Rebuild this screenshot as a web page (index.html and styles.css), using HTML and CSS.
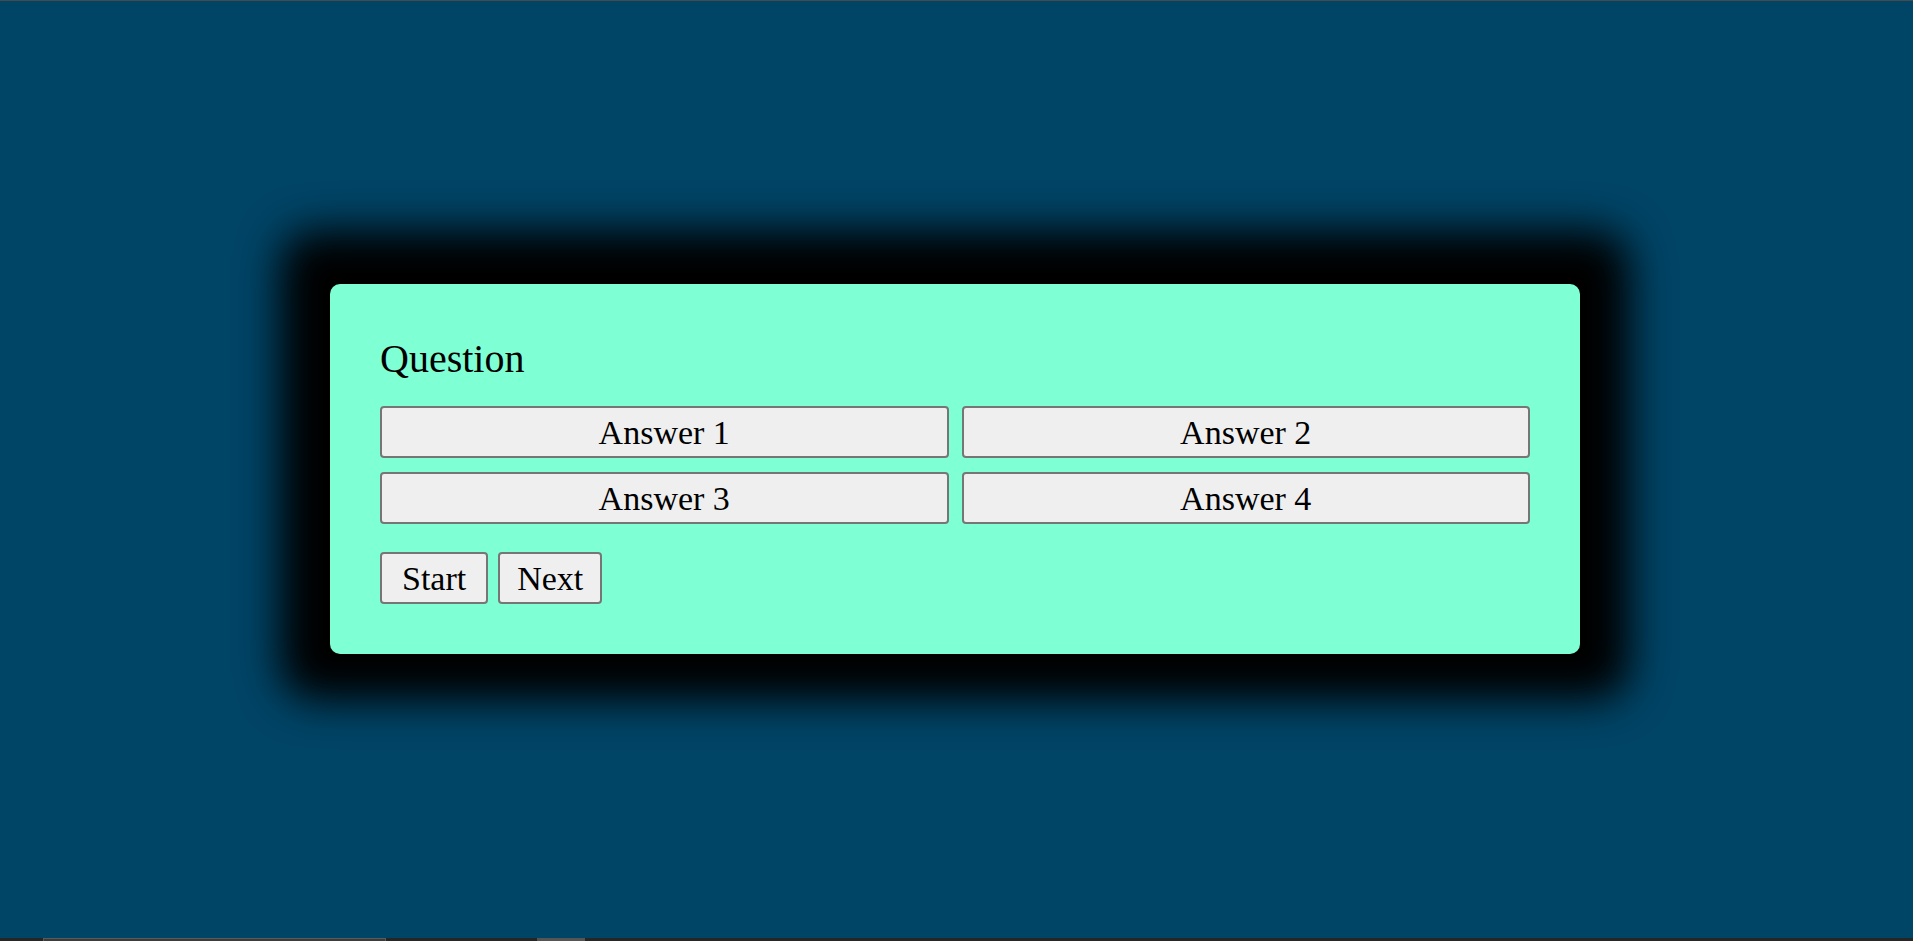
FILE: index.html
```html
<!DOCTYPE html>
<html lang="en">
<head>
<meta charset="utf-8">
<title>Quiz</title>
<link rel="stylesheet" href="styles.css">
</head>
<body>
<div class="top-line"></div>
<main class="stage">
  <div class="card">
    <h2 class="question">Question</h2>
    <div class="answers">
      <button class="btn answer">Answer 1</button>
      <button class="btn answer">Answer 2</button>
      <button class="btn answer">Answer 3</button>
      <button class="btn answer">Answer 4</button>
    </div>
    <div class="controls">
      <button class="btn ctrl ctrl-start">Start</button>
      <button class="btn ctrl ctrl-next">Next</button>
    </div>
  </div>
</main>
<div class="bottom-strip">
  <div class="seg seg-a"></div>
  <div class="seg seg-b"></div>
</div>
</body>
</html>
```

FILE: styles.css
```css
html, body {
  margin: 0;
  padding: 0;
  height: 100%;
}
body {
  background: #004466;
  font-family: "Liberation Serif", "Times New Roman", serif;
  display: flex;
  flex-direction: column;
  overflow: hidden;
}
.top-line {
  height: 1px;
  background: #4a4a4a;
  flex: none;
}
.stage {
  flex: 1;
  display: flex;
  align-items: center;
  justify-content: center;
}
.card {
  width: 1250px;
  box-sizing: border-box;
  padding: 50px;
  margin: 0 3px 1px 0;
  background: #7fffd4;
  border-radius: 10px;
  box-shadow: 0 -4px 42px 50px #000;
}
.question {
  margin: 0 0 22px;
  font-size: 40px;
  font-weight: normal;
  line-height: 50px;
  color: #000;
}
.answers {
  display: grid;
  grid-template-columns: 1fr 1fr;
  column-gap: 13px;
  row-gap: 14px;
}
.btn {
  font-family: "Liberation Serif", "Times New Roman", serif;
  font-size: 34px;
  color: #000;
  background: #efefef;
  border: 2px solid #767676;
  border-radius: 4px;
  height: 52px;
  line-height: 46px;
  padding: 2px 0 0;
  box-sizing: border-box;
  cursor: pointer;
}
.answer {
  width: 100%;
}
.controls {
  display: flex;
  gap: 10px;
  margin-top: 28px;
}
.ctrl-start {
  padding: 2px 20px 0;
}
.ctrl-next {
  padding: 2px 17px 0;
}
.bottom-strip {
  height: 3px;
  flex: none;
  background: #262626;
  display: flex;
}
.seg {
  height: 3px;
  box-sizing: border-box;
}
.seg-a {
  margin-left: 43px;
  width: 343px;
  background: #3c3c3c;
  border: 1px solid #5a5a5a;
  border-bottom: none;
}
.seg-b {
  margin-left: 151px;
  width: 48px;
  background: #555;
}
```
